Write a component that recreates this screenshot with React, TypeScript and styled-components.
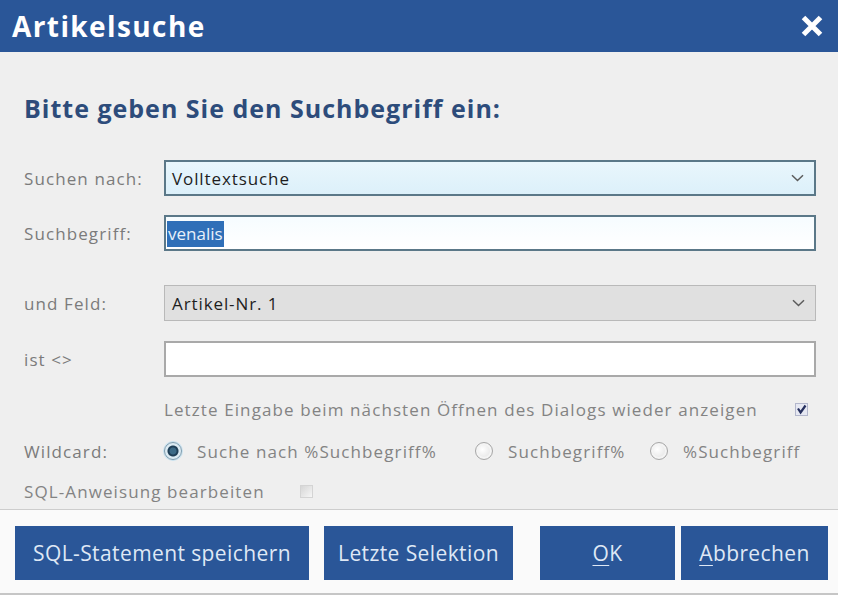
import React from "react";
import styled, { createGlobalStyle } from "styled-components";

const GlobalStyle = createGlobalStyle`
  html, body {
    margin: 0;
    padding: 0;
    background: #ffffff;
  }
  body {
    font-family: "Open Sans", "Noto Sans", sans-serif;
  }
`;

const Dialog = styled.div`
  width: 838px;
  height: 595px;
  display: flex;
  flex-direction: column;
  background: #efefef;
`;

const TitleBar = styled.header`
  height: 52px;
  flex: none;
  display: flex;
  align-items: center;
  justify-content: space-between;
  padding: 0 14px 0 12px;
  background: #2a5698;
  color: #ffffff;
`;

const Title = styled.h1`
  margin: 0;
  font-size: 28px;
  font-weight: 700;
  letter-spacing: 1.4px;
`;

const CloseButton = styled.button`
  border: 0;
  padding: 0;
  background: none;
  width: 24px;
  height: 24px;
  display: flex;
  cursor: pointer;
`;

const Body = styled.section`
  flex: 1;
  padding: 41px 22px 0 24px;
  display: flex;
  flex-direction: column;
`;

const Heading = styled.h2`
  margin: 0 0 37px;
  height: 30px;
  line-height: 30px;
  font-size: 25px;
  font-weight: 700;
  letter-spacing: 1px;
  color: #2d4c7b;
`;

const Row = styled.div<{ $gap: number; $height?: number }>`
  display: grid;
  grid-template-columns: 140px 1fr;
  align-items: center;
  margin-top: ${(p) => p.$gap}px;
  height: ${(p) => p.$height ?? 36}px;
`;

const Label = styled.span`
  font-size: 17px;
  letter-spacing: 1.1px;
  color: #7b7b7b;
`;

const Field = styled.div<{ $variant: "active" | "focus" | "disabled" | "plain" }>`
  box-sizing: border-box;
  height: 100%;
  display: flex;
  align-items: center;
  justify-content: space-between;
  padding: 0 10px 0 6px;
  font-size: 17px;
  letter-spacing: 0.9px;
  color: #1e1e1e;
  ${(p) =>
    p.$variant === "active" &&
    `background: linear-gradient(#e9f6fc, #dcf0fa); border: 2px solid #5b7888;`}
  ${(p) =>
    p.$variant === "focus" &&
    `background: linear-gradient(#f6fcff, #ffffff); border: 2px solid #5b7888; padding-left: 1px;`}
  ${(p) =>
    p.$variant === "disabled" &&
    `background: #e0e0e0; border: 1px solid #b9b9b9; padding-left: 7px;`}
  ${(p) => p.$variant === "plain" && `background: #ffffff; border: 2px solid #a9a9a9;`}
`;

const Selected = styled.span`
  background: #2f6fb8;
  color: #e8f0fa;
  letter-spacing: 0;
  padding: 1px 1px 2px;
`;

const Chevron = () => (
  <svg width="13" height="8" viewBox="0 0 13 8">
    <path d="M1 1.2 6.5 6.5 12 1.2" fill="none" stroke="#5c5c5c" strokeWidth="1.5" />
  </svg>
);

const OptionRow = styled.div<{ $gap: number }>`
  display: flex;
  align-items: center;
  height: 28px;
  margin-top: ${(p) => p.$gap}px;
  font-size: 17px;
  letter-spacing: 1.1px;
  color: #838383;
`;

const Indented = styled.div`
  margin-left: 140px;
  flex: 1;
  display: flex;
  align-items: center;
  justify-content: space-between;
  padding-right: 8px;
`;

const RadioGroup = styled.div`
  margin-left: 22px;
  flex: 1;
  display: flex;
  align-items: center;
`;

const Radio = styled.label<{ $width?: number }>`
  display: flex;
  align-items: center;
  gap: 15px;
  width: ${(p) => (p.$width ? `${p.$width}px` : "auto")};
`;

const RadioDot = styled.span<{ $on?: boolean }>`
  box-sizing: border-box;
  width: 18px;
  height: 18px;
  flex: none;
  border-radius: 50%;
  border: 1px solid ${(p) => (p.$on ? "#7e9db0" : "#a7a7a7")};
  background: ${(p) =>
    p.$on
      ? "radial-gradient(circle, #3c6a86 0 3px, #1f3f57 4px 5px, #dcebf3 6px)"
      : "radial-gradient(circle at 40% 40%, #ffffff, #dcdcdc)"};
  box-shadow: ${(p) => (p.$on ? "0 0 0 1px #c9e2ef" : "inset 0 0 0 2px #f4f4f4")};
`;

const CheckBox = styled.span<{ $checked?: boolean }>`
  box-sizing: border-box;
  width: 13px;
  height: 13px;
  display: inline-flex;
  align-items: center;
  justify-content: center;
  border: 1px solid ${(p) => (p.$checked ? "#b3b7cc" : "#d4d4d4")};
  background: ${(p) => (p.$checked ? "#e6e8f2" : "linear-gradient(135deg, #d6d6d6, #f6f6f6)")};
`;

const SqlLabel = styled.span`
  width: 276px;
`;

const Footer = styled.footer`
  flex: none;
  height: 86px;
  box-sizing: border-box;
  background: #fafafa;
  border-top: 1px solid #cdcdcd;
  border-bottom: 2px solid #c6c6c6;
  display: flex;
  align-items: flex-start;
  padding: 16px 0 0 15px;
`;

const Button = styled.button<{ $width: number; $gapLeft: number }>`
  width: ${(p) => p.$width}px;
  height: 54px;
  margin-left: ${(p) => p.$gapLeft}px;
  padding: 0;
  border: 0;
  background: #2a5698;
  color: #dfe8f5;
  font-family: "Open Sans", "Noto Sans", sans-serif;
  font-size: 21px;
  letter-spacing: 0.4px;
  cursor: pointer;

  u {
    text-decoration-thickness: 1px;
    text-underline-offset: 4px;
  }
`;

export default function App() {
  return (
    <>
      <GlobalStyle />
      <Dialog>
        <TitleBar>
          <Title>Artikelsuche</Title>
          <CloseButton aria-label="Schließen">
            <svg width="24" height="24" viewBox="0 0 24 24">
              <path d="M3.5 3.5 20.5 20.5M20.5 3.5 3.5 20.5" stroke="#ffffff" strokeWidth="5" />
            </svg>
          </CloseButton>
        </TitleBar>

        <Body>
          <Heading>Bitte geben Sie den Suchbegriff ein:</Heading>

          <Row $gap={0}>
            <Label>Suchen nach:</Label>
            <Field $variant="active">
              Volltextsuche
              <Chevron />
            </Field>
          </Row>
          <Row $gap={19}>
            <Label>Suchbegriff:</Label>
            <Field $variant="focus">
              <span>
                <Selected>venalis</Selected>
              </span>
            </Field>
          </Row>
          <Row $gap={34}>
            <Label>und Feld:</Label>
            <Field $variant="disabled">
              Artikel-Nr. 1
              <Chevron />
            </Field>
          </Row>
          <Row $gap={20}>
            <Label>ist &lt;&gt;</Label>
            <Field $variant="plain" />
          </Row>

          <OptionRow $gap={18}>
            <Indented>
              <span>Letzte Eingabe beim nächsten Öffnen des Dialogs wieder anzeigen</span>
              <CheckBox $checked>
                <svg width="11" height="11" viewBox="0 0 11 11">
                  <path d="M2 4.5 4.6 8.5 9.5 1.5" fill="none" stroke="#26305e" strokeWidth="2.2" />
                </svg>
              </CheckBox>
            </Indented>
          </OptionRow>

          <OptionRow $gap={14}>
            <Label style={{ width: 118 }}>Wildcard:</Label>
            <RadioGroup>
              <Radio $width={311}>
                <RadioDot $on />
                Suche nach %Suchbegriff%
              </Radio>
              <Radio $width={175}>
                <RadioDot />
                Suchbegriff%
              </Radio>
              <Radio>
                <RadioDot />
                %Suchbegriff
              </Radio>
            </RadioGroup>
          </OptionRow>

          <OptionRow $gap={12}>
            <SqlLabel>SQL-Anweisung bearbeiten</SqlLabel>
            <CheckBox />
          </OptionRow>
        </Body>

        <Footer>
          <Button $width={294} $gapLeft={0}>SQL-Statement speichern</Button>
          <Button $width={189} $gapLeft={15}>Letzte Selektion</Button>
          <Button $width={135} $gapLeft={27}>
            <u>O</u>K
          </Button>
          <Button $width={147} $gapLeft={6}>
            <u>A</u>bbrechen
          </Button>
        </Footer>
      </Dialog>
    </>
  );
}
